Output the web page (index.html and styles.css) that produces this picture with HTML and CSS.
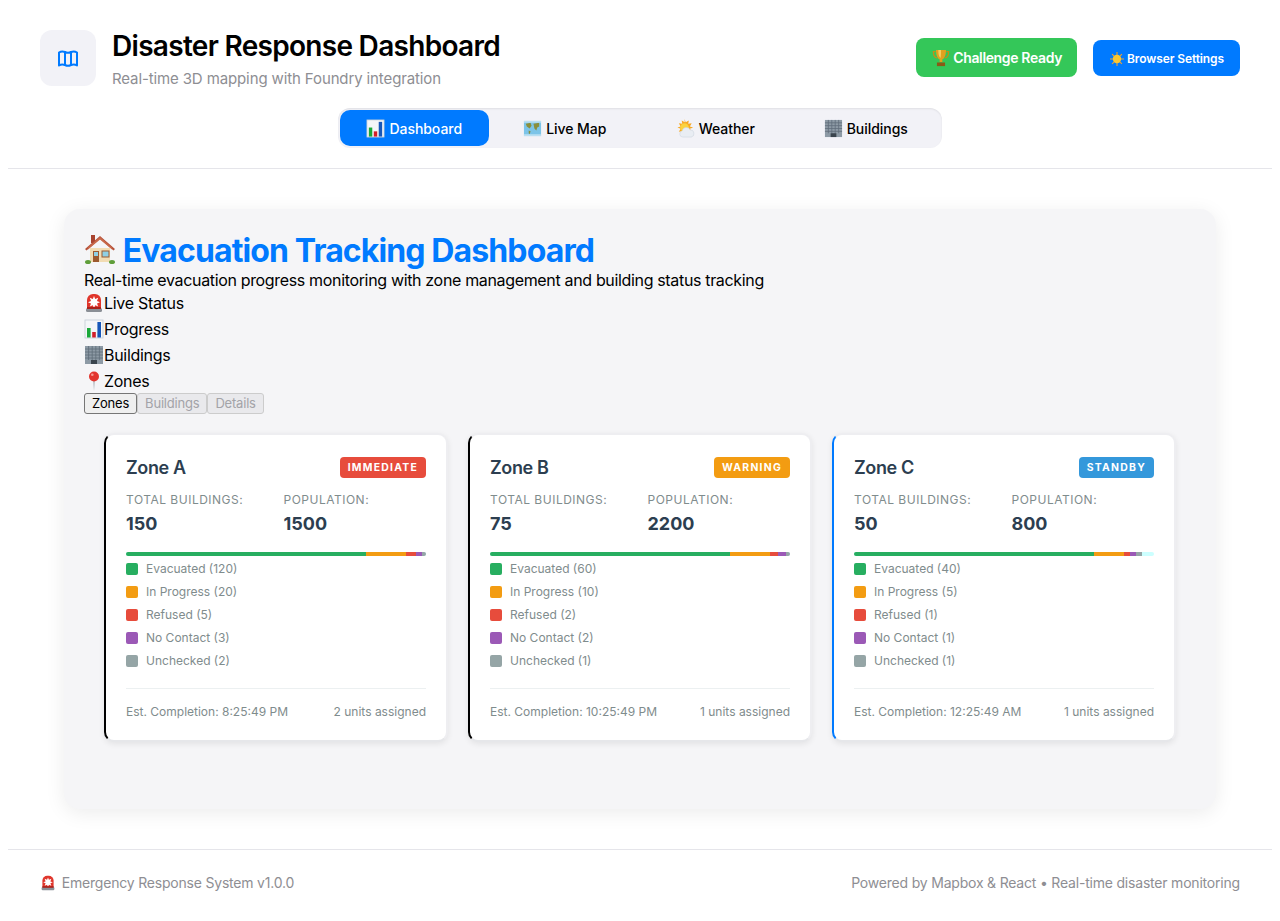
FILE: index.html
```html
<!DOCTYPE html>
<html lang="en">
<head>
    <meta charset="UTF-8">
    <meta name="viewport" content="width=device-width, initial-scale=1.0">
    <title>Disaster Response Dashboard</title>
    <link rel="stylesheet" href="styles.css">
</head>
<body>
    <svg class="sprite" aria-hidden="true">
        <symbol id="e-chart" viewBox="0 0 20 20">
            <rect x="1" y="1" width="18" height="18" fill="#f4f6f8"/>
            <rect x="1" y="1" width="18" height="18" fill="none" stroke="#c4ccd4" stroke-width=".8"/>
            <rect x="3" y="9" width="3.6" height="9.5" fill="#1aa839"/>
            <rect x="8.2" y="13" width="3.6" height="5.5" fill="#d2202a"/>
            <rect x="13.4" y="3" width="3.6" height="15.5" fill="#1757b8"/>
        </symbol>
        <symbol id="e-map" viewBox="0 0 20 20">
            <rect x="1" y="2" width="18" height="16" fill="#7cc4e8"/>
            <path d="M3 5l5-1 1 3-2 3-3-2zM11 5l6-1v4l-2 1-1 3-2-2zM6 12l2 1-1 3-1-1z" fill="#8a8f3c"/>
            <path d="M1 2h18v2H1zM1 16h18v2H1z" fill="#b9dff2"/>
        </symbol>
        <symbol id="e-weather" viewBox="0 0 20 20">
            <path d="M9 0l1.2 3.4L13.500 1.500l-.6 3.600 3.600-.6-1.900 3.300 3.400 1.200-3.400 1.200 1.900 3.300-9-1-4.500 1 1.900-3.300L1.500 9l3.400-1.200L3 4.500l3.600.6L6 1.500l3.200 1.900z" fill="#f7a823"/>
            <circle cx="9" cy="9" r="4.500" fill="#fbd23f"/>
            <path d="M7 19a3.300 3.300 0 0 1-.5-6.500A4.500 4.500 0 0 1 15 11.500a3.800 3.800 0 0 1 1 7.500z" fill="#e9edf3" stroke="#c8d0da" stroke-width=".5"/>
        </symbol>
        <symbol id="e-building" viewBox="0 0 20 20">
            <rect x="1" y="1" width="18" height="18" fill="#8d9aa5"/>
            <path d="M1 4h18M1 7h18M1 10h18M1 13h18M4.600 1v14M8.200 1v14M11.800 1v14M15.400 1v14" stroke="#5f6d79" stroke-width=".8"/>
            <rect x="7" y="15" width="6" height="4" fill="#3a444d"/>
        </symbol>
        <symbol id="e-trophy" viewBox="0 0 20 20">
            <path d="M4 3H1.500c0 4 1 6.500 4.500 7M16 3h2.500c0 4-1 6.500-4.500 7" fill="none" stroke="#c98a16" stroke-width="1.300"/>
            <path d="M4.500 1h11c0 6-1.500 9-4 10.500v3h-3v-3C6 10 4.500 7 4.500 1z" fill="#e0a11f"/>
            <path d="M7 1h3c0 4 0 7-.5 9C8 9 7 6 7 1z" fill="#f5cf5b"/>
            <rect x="5.500" y="15" width="9" height="4" fill="#8a5a16"/>
        </symbol>
        <symbol id="e-sun" viewBox="0 0 20 20">
            <path d="M10 0v20M0 10h20M3 3l14 14M17 3L3 17" stroke="#f2a32a" stroke-width="1.500"/>
            <circle cx="10" cy="10" r="6" fill="#fcc72f"/>
        </symbol>
        <symbol id="e-house" viewBox="0 0 32 32">
            <rect x="7" y="2" width="4" height="8" fill="#a8432f"/>
            <path d="M6 15h20v14H6z" fill="#f2dcb3"/>
            <path d="M1 16L16 3l15 13-1.500 1.500L16 6 2.500 17.500z" fill="#b5513a"/>
            <path d="M16 4L4 14.500v2L16 6.500l12 10v-2z" fill="#c9694a"/>
            <rect x="9" y="18" width="6" height="11" fill="#9c5a2e"/>
            <rect x="10" y="19" width="4" height="4" fill="#8fd0e4"/>
            <rect x="18" y="18" width="7" height="6" fill="#8fd0e4" stroke="#9c5a2e" stroke-width="1"/>
            <ellipse cx="4" cy="29" rx="3" ry="2" fill="#5f9e3a"/>
            <ellipse cx="28" cy="29" rx="3" ry="2" fill="#5f9e3a"/>
        </symbol>
        <symbol id="e-siren" viewBox="0 0 20 20">
            <path d="M3 15V7a6 6 0 0 1 6-6h2a6 6 0 0 1 6 6v8z" fill="#e0352b"/>
            <path d="M10 3l1.200 3 3-1.200L13 8l3 1.200-3 1.200 1.200 3-3-1.200L10 15l-1.200-2.800-3 1.200 1.200-3L4 9.200 7 8 5.800 4.800l3 1.200z" fill="#fff"/>
            <rect x="2" y="15" width="16" height="4" rx="1.500" fill="#8b8f96"/>
            <rect x="3" y="14" width="14" height="2" fill="#a9211b"/>
        </symbol>
        <symbol id="e-pin" viewBox="0 0 20 20">
            <path d="M9.300 9h1.400l-.7 11z" fill="#9aa3ab"/>
            <circle cx="10" cy="5.500" r="5" fill="#e2352e"/>
            <circle cx="8.300" cy="3.800" r="1.300" fill="#f59a92"/>
        </symbol>
    </svg>

    <header class="top">
        <div class="top-row">
            <div class="brand">
                <div class="brand-icon">
                    <svg viewBox="0 0 24 24" width="24" height="24" fill="none" stroke="#007aff" stroke-width="2" stroke-linejoin="round" stroke-linecap="round">
                        <path d="M3 6.500c2-1.300 4-1.300 6-.5v13c-2-.8-4-.8-6 .5z"/>
                        <path d="M9 6c2 1 4 1 6 0v13c-2 1-4 1-6 0z"/>
                        <path d="M15 6c2-.8 4-.8 6 .5v13c-2-1.300-4-1.300-6-.5z"/>
                    </svg>
                </div>
                <div class="brand-text">
                    <h1>Disaster Response Dashboard</h1>
                    <p class="subtitle">Real-time 3D mapping with Foundry integration</p>
                </div>
            </div>
            <div class="actions">
                <button class="btn btn-green"><svg class="emoji e18"><use href="#e-trophy"/></svg> Challenge Ready</button>
                <button class="btn btn-blue"><svg class="emoji e14"><use href="#e-sun"/></svg> Browser Settings</button>
            </div>
        </div>
        <nav class="tabs">
            <a class="tab active"><svg class="emoji e19"><use href="#e-chart"/></svg>Dashboard</a>
            <a class="tab"><svg class="emoji e19"><use href="#e-map"/></svg>Live Map</a>
            <a class="tab"><svg class="emoji e19"><use href="#e-weather"/></svg>Weather</a>
            <a class="tab"><svg class="emoji e19"><use href="#e-building"/></svg>Buildings</a>
        </nav>
    </header>

    <main class="main">
        <section class="panel">
            <h2><svg class="emoji e32"><use href="#e-house"/></svg> Evacuation Tracking Dashboard</h2>
            <p class="lead">Real-time evacuation progress monitoring with zone management and building status tracking</p>
            <div class="feature"><svg class="emoji e20"><use href="#e-siren"/></svg>Live Status</div>
            <div class="feature"><svg class="emoji e20"><use href="#e-chart"/></svg>Progress</div>
            <div class="feature"><svg class="emoji e20"><use href="#e-building"/></svg>Buildings</div>
            <div class="feature"><svg class="emoji e20"><use href="#e-pin"/></svg>Zones</div>
            <div class="views">
                <button class="view">Zones</button>
                <button class="view" disabled>Buildings</button>
                <button class="view" disabled>Details</button>
            </div>

            <div class="zones">
                <article class="zone zone-black">
                    <div class="zone-head">
                        <h3>Zone A</h3>
                        <span class="badge badge-red">IMMEDIATE</span>
                    </div>
                    <div class="stats">
                        <div><div class="stat-label">Total Buildings:</div><div class="stat-value">150</div></div>
                        <div><div class="stat-label">Population:</div><div class="stat-value">1500</div></div>
                    </div>
                    <div class="bar">
                        <span class="seg c-green" style="width:80%"></span>
                        <span class="seg c-orange" style="width:13.33%"></span>
                        <span class="seg c-red" style="width:3.33%"></span>
                        <span class="seg c-purple" style="width:2%"></span>
                        <span class="seg c-grey" style="width:1.33%"></span>
                    </div>
                    <ul class="legend">
                        <li><i class="c-green"></i>Evacuated (120)</li>
                        <li><i class="c-orange"></i>In Progress (20)</li>
                        <li><i class="c-red"></i>Refused (5)</li>
                        <li><i class="c-purple"></i>No Contact (3)</li>
                        <li><i class="c-grey"></i>Unchecked (2)</li>
                    </ul>
                    <div class="zone-foot"><span>Est. Completion: 8:25:49 PM</span><span>2 units assigned</span></div>
                </article>

                <article class="zone zone-black">
                    <div class="zone-head">
                        <h3>Zone B</h3>
                        <span class="badge badge-orange">WARNING</span>
                    </div>
                    <div class="stats">
                        <div><div class="stat-label">Total Buildings:</div><div class="stat-value">75</div></div>
                        <div><div class="stat-label">Population:</div><div class="stat-value">2200</div></div>
                    </div>
                    <div class="bar">
                        <span class="seg c-green" style="width:80%"></span>
                        <span class="seg c-orange" style="width:13.33%"></span>
                        <span class="seg c-red" style="width:2.67%"></span>
                        <span class="seg c-purple" style="width:2.67%"></span>
                        <span class="seg c-grey" style="width:1.33%"></span>
                    </div>
                    <ul class="legend">
                        <li><i class="c-green"></i>Evacuated (60)</li>
                        <li><i class="c-orange"></i>In Progress (10)</li>
                        <li><i class="c-red"></i>Refused (2)</li>
                        <li><i class="c-purple"></i>No Contact (2)</li>
                        <li><i class="c-grey"></i>Unchecked (1)</li>
                    </ul>
                    <div class="zone-foot"><span>Est. Completion: 10:25:49 PM</span><span>1 units assigned</span></div>
                </article>

                <article class="zone zone-blue">
                    <div class="zone-head">
                        <h3>Zone C</h3>
                        <span class="badge badge-blue">STANDBY</span>
                    </div>
                    <div class="stats">
                        <div><div class="stat-label">Total Buildings:</div><div class="stat-value">50</div></div>
                        <div><div class="stat-label">Population:</div><div class="stat-value">800</div></div>
                    </div>
                    <div class="bar">
                        <span class="seg c-green" style="width:80%"></span>
                        <span class="seg c-orange" style="width:10%"></span>
                        <span class="seg c-red" style="width:2%"></span>
                        <span class="seg c-purple" style="width:2%"></span>
                        <span class="seg c-grey" style="width:2%"></span>
                    </div>
                    <ul class="legend">
                        <li><i class="c-green"></i>Evacuated (40)</li>
                        <li><i class="c-orange"></i>In Progress (5)</li>
                        <li><i class="c-red"></i>Refused (1)</li>
                        <li><i class="c-purple"></i>No Contact (1)</li>
                        <li><i class="c-grey"></i>Unchecked (1)</li>
                    </ul>
                    <div class="zone-foot"><span>Est. Completion: 12:25:49 AM</span><span>1 units assigned</span></div>
                </article>
            </div>
        </section>
    </main>

    <footer class="foot">
        <span><svg class="emoji e16 foot-icon"><use href="#e-siren"/></svg> Emergency Response System v1.0.0</span>
        <span>Powered by Mapbox &amp; React • Real-time disaster monitoring</span>
    </footer>
</body>
</html>
```

FILE: styles.css
```css
body {
    font-family: Inter, "Liberation Sans", sans-serif;
    margin: 8px;
    background-color: #fff;
    color: #000;
}
.sprite {
    display: none;
}
.emoji {
    vertical-align: -3px;
    flex: none;
}
.e14 { width: 14px; height: 14px; }
.e16 { width: 16px; height: 16px; }
.e18 { width: 18px; height: 18px; vertical-align: -4px; }
.e19 { width: 19px; height: 19px; }
.e20 { width: 20px; height: 20px; vertical-align: -4px; }
.e32 { width: 32px; height: 32px; vertical-align: -3px; }

/* header */
.top {
    padding: 22px 32px 20px;
    border-bottom: 1px solid #e5e5ea;
}
.top-row {
    display: flex;
    justify-content: space-between;
    align-items: center;
}
.brand {
    display: flex;
    align-items: flex-start;
    gap: 16px;
}
.brand-icon {
    width: 56px;
    height: 56px;
    border-radius: 12px;
    background-color: #f2f2f7;
    display: flex;
    align-items: center;
    justify-content: center;
}
.brand-text {
    margin-bottom: -3px;
}
h1 {
    margin: 0 0 7px;
    font-size: 28px;
    line-height: 32px;
    font-weight: 600;
    letter-spacing: -0.7px;
}
.subtitle {
    margin: 0;
    font-size: 15px;
    line-height: 20px;
    letter-spacing: -0.12px;
    color: #8e8e93;
}
.actions {
    display: flex;
    align-items: center;
    gap: 16px;
}
.btn {
    border: 0;
    border-radius: 8px;
    color: #fff;
    font-family: inherit;
    font-weight: 600;
    white-space: nowrap;
}
.btn-green {
    background-color: #34c759;
    font-size: 14px;
    letter-spacing: -0.36px;
    padding: 0 15px 0 16px;
    height: 39px;
    margin-top: -1px;
}
.btn-blue {
    background-color: #007aff;
    font-size: 12px;
    letter-spacing: -0.1px;
    padding: 0 16px 0 17px;
    height: 36px;
}

/* tabs */
.tabs {
    display: flex;
    gap: 2px;
    width: fit-content;
    margin: 22px auto 0;
    padding: 2px;
    border-radius: 12px;
    background-color: #f2f2f7;
    box-shadow: inset 0 1px 2px rgba(0, 0, 0, 0.08);
}
.tab {
    width: 148.5px;
    height: 36px;
    display: flex;
    align-items: center;
    justify-content: center;
    gap: 4px;
    font-size: 14px;
    letter-spacing: -0.05px;
    font-weight: 500;
    border-radius: 10px;
    color: #000;
}
.tab.active {
    background-color: #007aff;
    color: #fff;
}

/* main panel */
.main {
    padding: 40px 56px;
}
.panel {
    background-color: #f5f5f7;
    border-radius: 16px;
    padding: 20px;
    height: 600px;
    box-sizing: border-box;
    box-shadow: 0 4px 20px rgba(0, 0, 0, 0.08);
}
h2 {
    margin: 0 0 -3px;
    font-size: 32px;
    line-height: 44px;
    font-weight: 700;
    letter-spacing: -0.88px;
    color: #007aff;
}
.lead {
    margin: 0;
    font-size: 16px;
    line-height: 20px;
    letter-spacing: -0.34px;
}
.feature {
    font-size: 16px;
    line-height: 26px;
    letter-spacing: -0.3px;
}
.views {
    display: flex;
    margin-top: -1px;
}
.view {
    font-family: inherit;
    font-size: 13px;
    letter-spacing: -0.2px;
    height: 21px;
    padding: 0 7px 1px;
    border: 1px solid #767676;
    border-radius: 3px;
    background-color: #efefef;
    color: #000;
}
.view:disabled {
    border-color: #ccc;
    background-color: #e9e9ec;
    color: #a3a3a8;
}

/* zone cards */
.zones {
    display: grid;
    grid-template-columns: repeat(3, 1fr);
    gap: 20px;
    padding: 19px 20px 20px;
}
.zone {
    background-color: #fff;
    border: 2px solid #eeeef1;
    border-bottom-color: #e6e7ea;
    border-radius: 10px;
    padding: 22px 20px 21px;
    box-shadow: 0 2px 6px rgba(0, 0, 0, 0.08);
}
.zone-black { border-left-color: #000; }
.zone-blue { border-left-color: #007aff; }
.zone-head {
    display: flex;
    justify-content: space-between;
    align-items: center;
    margin-bottom: 14px;
}
h3 {
    margin: 0;
    font-size: 18px;
    font-weight: 600;
    letter-spacing: -0.4px;
    color: #2c3e50;
}
.badge {
    padding: 4px 8px;
    border-radius: 4px;
    color: #fff;
    font-size: 10.4px;
    line-height: 13px;
    font-weight: 700;
    letter-spacing: 1.25px;
}
.badge-red { background-color: #e74c3c; }
.badge-orange { background-color: #f39c12; }
.badge-blue { background-color: #3498db; }
.stats {
    display: grid;
    grid-template-columns: 1fr 1fr;
    gap: 15px;
    margin-bottom: 17px;
}
.stat-label {
    font-size: 12px;
    line-height: 15px;
    color: #7f8c8d;
    text-transform: uppercase;
    letter-spacing: 0.5px;
    margin-bottom: 6px;
}
.stat-value {
    font-size: 18px;
    line-height: 22px;
    font-weight: 700;
    color: #2c3e50;
}
.bar {
    display: flex;
    height: 4px;
    border-radius: 2px;
    overflow: hidden;
    background-color: #ccffff;
    margin-bottom: 1px;
}
.seg {
    display: block;
    height: 100%;
}
.c-green { background-color: #27ae60; }
.c-orange { background-color: #f39c12; }
.c-red { background-color: #e74c3c; }
.c-purple { background-color: #9b59b6; }
.c-grey { background-color: #95a5a6; }
.legend {
    list-style: none;
    margin: 0;
    padding: 0 0 16px;
    border-bottom: 1px solid #ecf0f1;
}
.legend li {
    display: flex;
    align-items: center;
    gap: 8px;
    height: 23px;
    font-size: 12px;
    color: #7f8c8d;
}
.legend i {
    width: 12px;
    height: 12px;
    border-radius: 2px;
}
.zone-foot {
    display: flex;
    justify-content: space-between;
    padding-top: 15px;
    font-size: 12px;
    line-height: 15px;
    color: #7f8c8d;
}

/* footer */
.foot {
    display: flex;
    justify-content: space-between;
    padding: 24px 32px;
    border-top: 1px solid #e5e5ea;
    font-size: 14px;
    line-height: 17px;
    letter-spacing: -0.2px;
    color: #8e8e93;
}
.foot-icon {
    margin-right: 2px;
}
```
